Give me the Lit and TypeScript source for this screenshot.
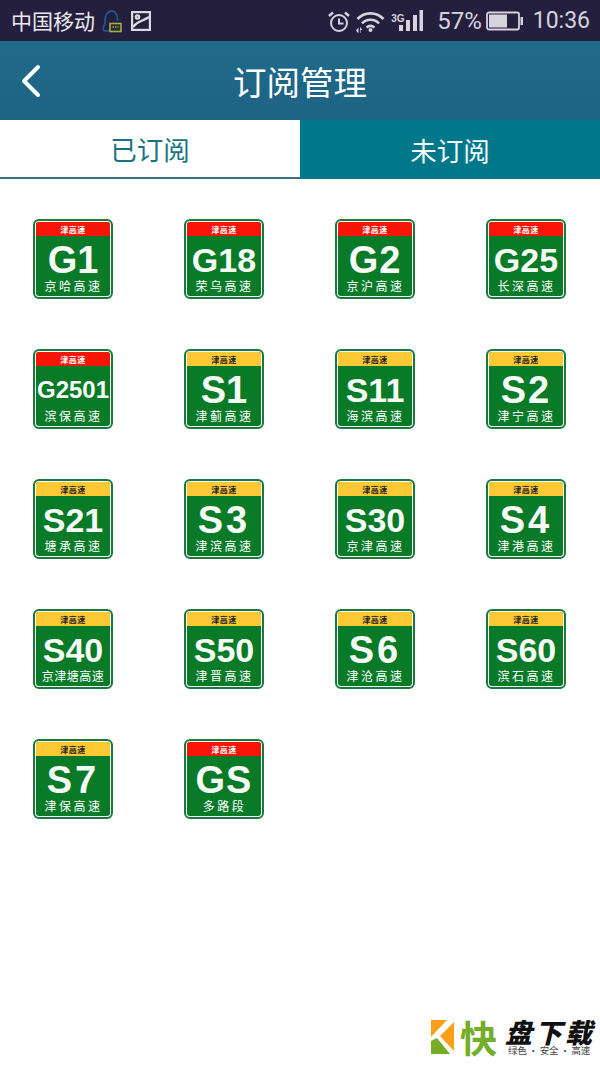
import { LitElement, html, css, svg } from "lit";
import { customElement } from "lit/decorators.js";

type Sign = { code: string; name: string; red: boolean; size: number; ls: number };

const signs: Sign[] = [
  { code: "G1", name: "京哈高速", red: true, size: 38, ls: 0 },
  { code: "G18", name: "荣乌高速", red: true, size: 34, ls: 0 },
  { code: "G2", name: "京沪高速", red: true, size: 38, ls: 1 },
  { code: "G25", name: "长深高速", red: true, size: 34, ls: 0 },
  { code: "G2501", name: "滨保高速", red: true, size: 24, ls: 0 },
  { code: "S1", name: "津蓟高速", red: false, size: 38, ls: 0 },
  { code: "S11", name: "海滨高速", red: false, size: 34, ls: 0 },
  { code: "S2", name: "津宁高速", red: false, size: 38, ls: 2 },
  { code: "S21", name: "塘承高速", red: false, size: 34, ls: 0 },
  { code: "S3", name: "津滨高速", red: false, size: 38, ls: 3 },
  { code: "S30", name: "京津高速", red: false, size: 34, ls: 0 },
  { code: "S4", name: "津港高速", red: false, size: 38, ls: 3 },
  { code: "S40", name: "京津塘高速", red: false, size: 34, ls: 0 },
  { code: "S50", name: "津晋高速", red: false, size: 34, ls: 0 },
  { code: "S6", name: "津沧高速", red: false, size: 38, ls: 3 },
  { code: "S60", name: "滨石高速", red: false, size: 34, ls: 0 },
  { code: "S7", name: "津保高速", red: false, size: 38, ls: 3 },
  { code: "GS", name: "多路段", red: true, size: 38, ls: 1 },
];

const clock = svg`<svg class="ic" width="22" height="24" viewBox="0 0 22 24" fill="none" stroke="#d6d2de" stroke-width="2"><circle cx="11" cy="14" r="8"/><path d="M11 9.500V14.500H15.500"/><path d="M1 7 5 3.500M21 7 17 3.500" stroke-width="2.400"/></svg>`;
const wifi = svg`<svg class="ic" width="29" height="24" viewBox="0 0 29 24" fill="none" stroke="#d6d2de" stroke-width="2.600"><path d="M1.500 10C8.500 2.500 20.500 2.500 27.500 10"/><path d="M6 14.500C10.500 9.500 18.500 9.500 23 14.500"/><path d="M10.500 18.500C13 16.500 16 16.500 18.500 18.500"/><circle cx="14.500" cy="21" r="2" fill="#d6d2de" stroke="none"/><path d="M0 21.500 2.500 18.500V24H2ZM4 18 6.500 21H4.500V24H4Z" fill="#d6d2de" stroke="none"/></svg>`;
const signal = svg`<svg class="ic" width="24" height="21" viewBox="0 0 24 21" fill="#d6d2de"><rect x="0" y="15" width="4" height="6"/><rect x="7" y="10" width="4" height="11"/><rect x="14" y="5" width="4" height="16"/><rect x="20.500" y="0" width="3.500" height="21"/></svg>`;
const battery = svg`<svg class="ic" width="37" height="20" viewBox="0 0 37 20" fill="none"><rect x="1" y="1.500" width="32" height="17" rx="2" stroke="#d6d2de" stroke-width="1.800"/><rect x="3" y="3.500" width="18" height="13" fill="#d6d2de"/><rect x="34.500" y="6" width="2.500" height="8" fill="#d6d2de"/></svg>`;
const notif = svg`<svg class="ic" width="20" height="24" viewBox="0 0 20 24" fill="none"><path d="M1.500 21.500C0.500 19 2.500 16.500 3 13.500C2.500 6 6 2 9.500 2C13 2 16 6 15.500 12" stroke="#27508f" stroke-width="1.800"/><path d="M1.500 21.800H7" stroke="#27508f" stroke-width="1.800"/><rect x="8" y="14.500" width="11" height="8" fill="#2b2d30" stroke="#a3ac4a" stroke-width="1.600"/><path d="M10.500 18H16.500" stroke="#a3ac4a" stroke-width="1.500" stroke-dasharray="1.500 1"/></svg>`;
const pic = svg`<svg class="ic" width="20" height="20" viewBox="0 0 20 20" fill="none" stroke="#dcd9e2" stroke-width="2.200"><rect x="1.100" y="1.100" width="17.800" height="17.800"/><path d="M2 16C7 9 11 11 18 6"/><circle cx="6.500" cy="6" r="1.700"/></svg>`;
const back = svg`<svg width="22" height="34" viewBox="0 0 22 34" fill="none" stroke="#fff" stroke-width="4" stroke-linecap="round" stroke-linejoin="round"><path d="M18 3 4 17 18 31"/></svg>`;
const logoMark = svg`<svg width="23" height="34" viewBox="0 0 23 34"><path d="M0 0H16L0 17Z" fill="#f7a11a"/><path d="M23 2V31L9 16Z" fill="#f7a11a"/><path d="M0 21 6 18 19 34H0Z" fill="#76ac27"/></svg>`;

@customElement("app-root")
export class AppRoot extends LitElement {
  static styles = css`
    :host {
      display: block;
      width: 600px;
      height: 1067px;
      position: relative;
      overflow: hidden;
      background: #fefefe;
      font-family: "Noto Sans CJK SC", "Liberation Sans", sans-serif;
    }
    .status {
      height: 41px;
      background: #241f3d;
      display: flex;
      align-items: center;
      padding: 0 10px 0 11px;
      color: #d6d2de;
      box-sizing: border-box;
    }
    .carrier {
      font-size: 21px;
      color: #ece9f0;
      line-height: 41px;
      margin-right: 7px;
    }
    .ic {
      display: block;
      flex: none;
    }
    .pic {
      margin-left: 9px;
      display: flex;
    }
    .spacer {
      flex: 1;
    }
    .right {
      display: flex;
      align-items: center;
    }
    .wifi {
      margin-left: 6px;
    }
    .net {
      font: bold 10px "Liberation Sans", sans-serif;
      align-self: flex-start;
      width: 8px;
      margin: 6px 0 0 6px;
      white-space: nowrap;
    }
    .pct {
      font: 24px "Roboto", "Liberation Sans", sans-serif;
      margin: 0 4px 0 14px;
    }
    .time {
      font: 23px "Roboto", "Liberation Sans", sans-serif;
      margin-left: 10px;
    }
    .header {
      height: 79px;
      background: linear-gradient(#206b89, #1d6384);
      display: grid;
      grid-template-columns: 60px 1fr 60px;
      align-items: center;
      color: #fff;
      box-sizing: border-box;
    }
    .back {
      display: flex;
      padding-left: 20px;
    }
    .title {
      text-align: center;
      font-size: 33.500px;
      line-height: 79px;
    }
    .tabs {
      display: grid;
      grid-template-columns: 1fr 1fr;
      height: 59px;
    }
    .tab {
      display: flex;
      align-items: center;
      justify-content: center;
      font-size: 26.500px;
      box-sizing: border-box;
    }
    .on {
      background: #fff;
      color: #17757f;
      border-bottom: 2px solid #3f6f78;
    }
    .off {
      background: #00788a;
      color: #f4fbfc;
    }
    .grid {
      display: grid;
      grid-template-columns: repeat(4, 151px);
      grid-auto-rows: 130px;
      padding: 40px 0 0 33px;
    }
    .sign {
      width: 80px;
      height: 80px;
      box-sizing: border-box;
      border: 2px solid #177a3c;
      border-radius: 6px;
      background: #fff;
      padding: 1px;
    }
    .inner {
      height: 100%;
      border-radius: 3px;
      overflow: hidden;
      background: #087a28;
      display: flex;
      flex-direction: column;
      color: #fff;
    }
    .top {
      height: 14px;
      flex: none;
      display: flex;
      align-items: center;
      justify-content: center;
      font-size: 8px;
      font-weight: 700;
      letter-spacing: 0.5px;
    }
    .red {
      background: #f91408;
      color: #fff;
    }
    .yellow {
      background: #fcc834;
      color: #222;
    }
    .code {
      height: 40px;
      margin-top: 4px;
      flex: none;
      display: flex;
      align-items: center;
      justify-content: center;
      font-family: "Liberation Sans", sans-serif;
      font-weight: 700;
      line-height: 1;
      white-space: nowrap;
      color: #f6fbf6;
    }
    .name {
      height: 12px;
      flex: none;
      display: flex;
      align-items: center;
      justify-content: center;
      font-size: 12px;
      letter-spacing: 2.500px;
      padding-left: 1px;
      line-height: 12px;
      white-space: nowrap;
    }
    .name.long {
      letter-spacing: 0.500px;
      padding-left: 0;
    }
    .mark {
      position: absolute;
      left: 431px;
      top: 1018px;
      display: flex;
      align-items: center;
      width: 165px;
      height: 38px;
    }
    .kuai {
      font-size: 37px;
      font-weight: 700;
      color: #74ad2a;
      margin-left: 6px;
      line-height: 38px;
      width: 37px;
    }
    .brand {
      margin-left: 8px;
      display: flex;
      flex-direction: column;
      color: #111;
    }
    .brand b {
      display: block;
      font-size: 27px;
      line-height: 27px;
      height: 27px;
      font-style: italic;
      font-weight: 900;
      letter-spacing: 3px;
      white-space: nowrap;
    }
    .brand span {
      display: block;
      font-size: 9.500px;
      line-height: 11px;
      height: 11px;
      margin-left: 3px;
      letter-spacing: -0.200px;
      color: #444;
      white-space: nowrap;
    }
  `;

  render() {
    return html`
      <div class="status">
        <span class="carrier">中国移动</span>
        ${notif}
        <span class="pic">${pic}</span>
        <span class="spacer"></span>
        <div class="right">
          ${clock}
          <span class="wifi">${wifi}</span>
          <span class="net">3G</span>
          ${signal}
          <span class="pct">57%</span>
          ${battery}
          <span class="time">10:36</span>
        </div>
      </div>
      <div class="header">
        <div class="back">${back}</div>
        <div class="title">订阅管理</div>
        <div></div>
      </div>
      <div class="tabs">
        <div class="tab on">已订阅</div>
        <div class="tab off">未订阅</div>
      </div>
      <div class="grid">
        ${signs.map(
          (s) => html`
            <div class="sign">
              <div class="inner">
                <div class="top ${s.red ? "red" : "yellow"}">津高速</div>
                <div class="code" style="font-size:${s.size}px;letter-spacing:${s.ls}px">${s.code}</div>
                <div class="name ${s.name.length > 4 ? "long" : ""}">${s.name}</div>
              </div>
            </div>
          `
        )}
      </div>
      <div class="mark">
        ${logoMark}
        <span class="kuai">快</span>
        <div class="brand">
          <b>盘下载</b>
          <span>绿色 · 安全 · 高速</span>
        </div>
      </div>
    `;
  }
}
